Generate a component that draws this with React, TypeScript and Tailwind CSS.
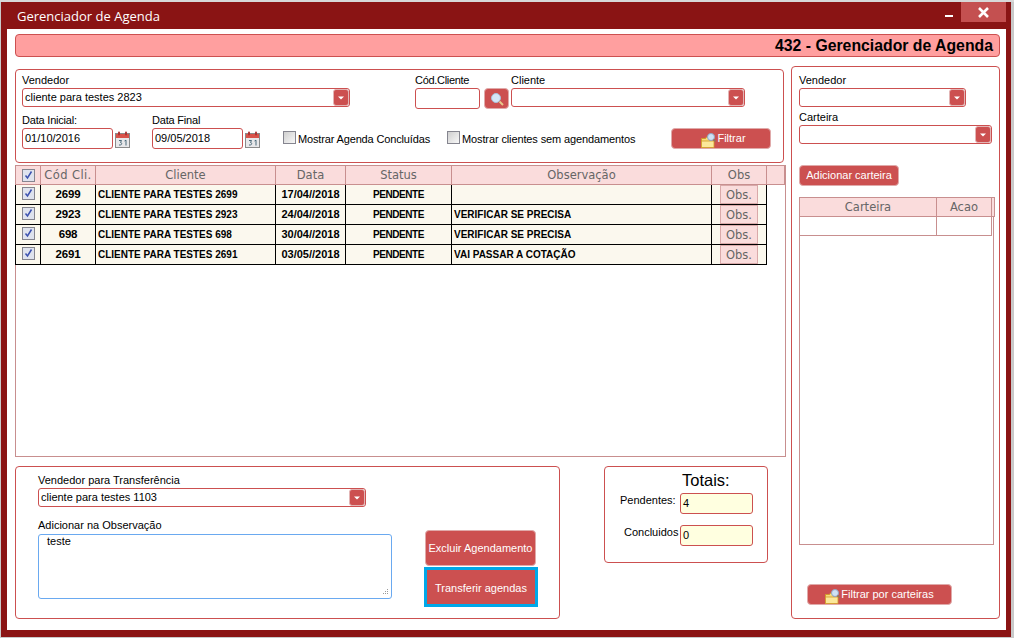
import React from 'react';

const rows = [
  { cod: '2699', cliente: 'CLIENTE PARA TESTES 2699', data: '17/04//2018', obs: '' },
  { cod: '2923', cliente: 'CLIENTE PARA TESTES 2923', data: '24/04//2018', obs: 'VERIFICAR SE PRECISA' },
  { cod: '698', cliente: 'CLIENTE PARA TESTES 698', data: '30/04//2018', obs: 'VERIFICAR SE PRECISA' },
  { cod: '2691', cliente: 'CLIENTE PARA TESTES 2691', data: '03/05//2018', obs: 'VAI PASSAR A COTAÇÃO' },
];

const Select = ({ value, className }: { value?: string; className: string }) => (
  <div className={`h-[19px] border border-[#cc5050] rounded-[3px] bg-white flex items-center justify-between pl-[2px] text-[11px] leading-none ${className}`}>
    <span>{value}</span>
    <span className="w-[16px] h-[17px] bg-[#cc5050] border border-[#e3b5b5] rounded-[3px] flex items-center justify-center">
      <svg width="6" height="4" viewBox="0 0 6 4"><path d="M0 0.5h6L3 3.5z" fill="#fff" /></svg>
    </span>
  </div>
);

const Label = ({ children, className = '' }: { children: React.ReactNode; className?: string }) => (
  <div className={`h-[14px] leading-[13px] text-[11px] ${className}`}>{children}</div>
);

const Calendar = () => (
  <svg width="15" height="17" viewBox="0 0 15 17" className="ml-[2px] mt-[3px] shrink-0">
    <rect x="0.5" y="2.5" width="14" height="14" fill="#e8e8ea" stroke="#8a8a8a" />
    <rect x="1" y="3" width="13" height="4" fill="#d9534a" />
    <rect x="3" y="0.5" width="2" height="4" rx="1" fill="#a33" />
    <rect x="10" y="0.5" width="2" height="4" rx="1" fill="#a33" />
    <path d="M4 9.5h2.5l-1 2c1 0 1.2.6 1.2 1.3s-.6 1.4-2.7 1.2M9.5 10l1.5-.8v5.3" fill="none" stroke="#4a6a7a" strokeWidth="1" />
  </svg>
);

const Checkbox = ({ checked, className = '' }: { checked?: boolean; className?: string }) => (
  <span className={`w-[13px] h-[13px] shrink-0 border border-[#85858f] flex items-center justify-center ${checked ? 'bg-[#dfe3ee]' : 'bg-gradient-to-br from-[#cfcfcf] to-[#f8f8f8]'} ${className}`}>
    {checked && (
      <svg width="11" height="11" viewBox="0 0 11 11"><path d="M2.5 5.5l2 2.5 4-6.5" fill="none" stroke="#3d52b0" strokeWidth="1.5" /></svg>
    )}
  </span>
);

const FolderIcon = () => (
  <svg width="15" height="15" viewBox="0 0 15 15" className="shrink-0">
    <path d="M0.5 5.5h4l1-1.5h3v10.5h-8z" fill="#f7dc7a" stroke="#d19a2a" />
    <rect x="0.5" y="8" width="12.5" height="6.5" fill="#fbe89a" stroke="#d19a2a" strokeWidth="0.8" />
    <circle cx="10" cy="4" r="3.5" fill="#cfe1f5" stroke="#8fa6c4" />
    <path d="M12.5 6.5l2 2" stroke="#8a7a5a" strokeWidth="1.5" />
  </svg>
);

const redBtn = 'bg-[#cc5050] border border-[#e0aaaa] rounded-[4px] text-white text-[11px] flex items-center justify-center leading-none';

const Input = ({ value, className }: { value?: string; className: string }) => (
  <div className={`h-[21px] border border-[#cc5050] rounded-[3px] pl-[2px] flex items-center text-[11px] ${className}`}>{value}</div>
);

const headCell = 'border border-[#c88f8f] bg-[#fadcdc] text-[#666] font-normal text-[11.5px] h-[19px] p-0 pt-px text-center';
const bodyCell = 'border border-black bg-[#fbf8ee] h-[20px] p-0 text-[10px] font-bold text-black leading-none';

export default function App() {
  return (
    <div className="w-[1014px] h-[638px] bg-[#c9c9c9] overflow-hidden text-black text-[11px] font-['Liberation_Sans',Arial,sans-serif]">
      <div className="h-[2px] bg-[#d8d8d8]" />
      <div className="ml-[1px] w-[1010px] h-[635px] bg-[#8a1414] pl-[6px] pr-[5px] pb-[7px] flex flex-col">
        {/* title bar */}
        <div className="h-[27px] flex items-start justify-between shrink-0">
          <div className="text-white text-[13px] pl-[10px] pt-[5px] leading-[18px] font-['Open_Sans',sans-serif]">Gerenciador de Agenda</div>
          <div className="flex items-start">
            <span className="w-[8px] h-[2px] bg-white mt-[13px] mr-[8px]" />
            <span className="w-[45px] h-[20px] bg-[#c45050] flex items-center justify-center">
              <svg width="11" height="11" viewBox="0 0 11 11"><path d="M1 1l9 9M10 1l-9 9" stroke="#fff" strokeWidth="2.6" /></svg>
            </span>
          </div>
        </div>

        {/* content */}
        <div className="flex-1 bg-white pl-[8px] pr-[6px] pt-[5px]">
          <div className="h-[23px] bg-[#ff9f9f] border border-[#cc5050] rounded-[4px] flex items-center justify-end pr-[6px] text-[15.8px] font-bold leading-none">
            432 - Gerenciador de Agenda
          </div>

          <div className="flex items-start mt-[9px]">
            <div className="w-[771px] mt-[3px] shrink-0">
              {/* filters */}
              <div className="w-[769px] h-[94px] border border-[#cc5050] rounded-[4px] pl-[6px] pt-[4px]">
                <div className="flex items-start h-[35px]">
                  <div className="w-[328px]">
                    <Label>Vendedor</Label>
                    <Select value="cliente para testes 2823" className="w-[328px]" />
                  </div>
                  <div className="ml-[65px] w-[65px]">
                    <Label className="tracking-[-0.3px]">Cód.Cliente</Label>
                    <Input className="w-[65px] h-[19px]" />
                  </div>
                  <div className="ml-[4px] mt-[14px] w-[25px] h-[21px] bg-[#cc5050] border border-[#e0aaaa] rounded-[4px] flex items-center justify-center">
                    <svg width="14" height="14" viewBox="0 0 14 14">
                      <circle cx="6" cy="6" r="4.5" fill="#d5e6f7" stroke="#a9c2dc" />
                      <path d="M9.5 9.5l3.5 3.5" stroke="#e8c98a" strokeWidth="2" />
                    </svg>
                  </div>
                  <div className="ml-[2px]">
                    <Label>Cliente</Label>
                    <Select className="w-[234px]" />
                  </div>
                </div>
                <div className="flex items-start mt-[5px]">
                  <div className="w-[130px]">
                    <Label className="tracking-[-0.2px]">Data Inicial:</Label>
                    <div className="flex items-start">
                      <Input value="01/10/2016" className="w-[91px]" />
                      <Calendar />
                    </div>
                  </div>
                  <div className="w-[131px]">
                    <Label className="tracking-[-0.2px]">Data Final</Label>
                    <div className="flex items-start">
                      <Input value="09/05/2018" className="w-[91px]" />
                      <Calendar />
                    </div>
                  </div>
                  <div className="w-[164px] mt-[17px] flex items-start">
                    <Checkbox />
                    <span className="ml-[2px] mt-[2px] leading-[13px] tracking-[-0.15px]">Mostrar Agenda Concluídas</span>
                  </div>
                  <div className="w-[224px] mt-[17px] flex items-start">
                    <Checkbox />
                    <span className="ml-[2px] mt-[2px] leading-[13px] tracking-[-0.12px]">Mostrar clientes sem agendamentos</span>
                  </div>
                  <div className={`${redBtn} mt-[14px] w-[100px] h-[21px] pl-[5px]`}>
                    <span className="mt-[4px]"><FolderIcon /></span>
                    <span className="ml-[1px]">Filtrar</span>
                  </div>
                </div>
              </div>

              {/* grid */}
              <div className="mt-[2px] h-[292px] border border-[#c88f8f]">
                <table className="table-fixed border-collapse w-[769px] font-['DejaVu_Sans',sans-serif] -mt-px -ml-px">
                  <colgroup>
                    <col className="w-[25px]" />
                    <col className="w-[55px]" />
                    <col className="w-[180px]" />
                    <col className="w-[70px]" />
                    <col className="w-[106px]" />
                    <col className="w-[260px]" />
                    <col className="w-[55px]" />
                    <col className="w-[18px]" />
                  </colgroup>
                  <thead>
                    <tr>
                      <th className={headCell}><Checkbox checked className="mx-auto" /></th>
                      <th className={`${headCell} tracking-[0.4px]`}>Cód Cli.</th>
                      <th className={headCell}>Cliente</th>
                      <th className={headCell}>Data</th>
                      <th className={headCell}>Status</th>
                      <th className={headCell}>Observação</th>
                      <th className={headCell}>Obs</th>
                      <th className={headCell}></th>
                    </tr>
                  </thead>
                  <tbody className="font-['Liberation_Sans',sans-serif]">
                    {rows.map((r) => (
                      <tr key={r.cod}>
                        <td className={bodyCell}><Checkbox checked className="mx-auto -mt-[2px]" /></td>
                        <td className={`${bodyCell} text-center text-[11.5px] tracking-[-0.2px]`}>{r.cod}</td>
                        <td className={`${bodyCell} pl-[2px]`}>{r.cliente}</td>
                        <td className={`${bodyCell} text-center text-[11px]`}>{r.data}</td>
                        <td className={`${bodyCell} text-center tracking-[-0.45px]`}>PENDENTE</td>
                        <td className={`${bodyCell} pl-[2px]`}>{r.obs}</td>
                        <td className={bodyCell}>
                          <div className="mx-auto w-[38px] h-[19px] pt-px bg-[#fadcdc] border border-[#d9a9a9] text-[#666] font-normal font-['DejaVu_Sans',sans-serif] text-[11.5px] flex items-center justify-center">Obs.</div>
                        </td>
                      </tr>
                    ))}
                  </tbody>
                </table>
              </div>

              {/* bottom */}
              <div className="flex items-start mt-[9px]">
                <div className="w-[545px] h-[153px] border border-[#cc5050] rounded-[4px] pl-[22px] pt-[7px] flex items-start">
                  <div className="w-[354px]">
                    <Label>Vendedor para Transferência</Label>
                    <Select value="cliente para testes 1103" className="w-[328px]" />
                    <Label className="mt-[12px]">Adicionar na Observação</Label>
                    <div className="relative mt-px h-[65px] border border-[#6aa9f0] rounded-[3px] pl-[8px] leading-[13px]">
                      teste
                      <svg width="8" height="8" viewBox="0 0 8 8" className="absolute right-[2px] bottom-[2px]">
                        <path d="M6 1h1v1H6zM4 3h1v1H4zM6 3h1v1H6zM2 5h1v1H2zM4 5h1v1H4zM6 5h1v1H6z" fill="#9a9a9a" />
                      </svg>
                    </div>
                  </div>
                  <div className="ml-[32px] mt-[56px] w-[114px]">
                    <div className={`${redBtn} ml-px w-[111px] h-[36px]`}>Excluir Agendamento</div>
                    <div className="mt-px w-[114px] h-[40px] border-[3px] border-[#00a8e8] bg-[#cc5050] text-white flex items-center justify-center pt-[2px]">Transferir agendas</div>
                  </div>
                </div>
                <div className="ml-[44px] w-[164px] h-[97px] border border-[#cc5050] rounded-[4px] pl-[15px] pt-[2px]">
                  <div className="pl-[62px] text-[16.5px] leading-[22px]">Totais:</div>
                  <div className="flex items-start mt-[2px]">
                    <span className="w-[60px] leading-[14px]">Pendentes:</span>
                    <Input value="4" className="w-[73px] bg-[#ffffe0]" />
                  </div>
                  <div className="flex items-start mt-[11px]">
                    <span className="w-[60px] pl-[4px] leading-[14px]">Concluidos</span>
                    <Input value="0" className="w-[73px] bg-[#ffffe0]" />
                  </div>
                </div>
              </div>
            </div>

            {/* right panel */}
            <div className="ml-[5px] w-[209px] h-[553px] border border-[#cc5050] rounded-[4px] pl-[7px] pt-[7px] shrink-0">
              <Label>Vendedor</Label>
              <Select className="w-[167px]" />
              <Label className="mt-[4px]">Carteira</Label>
              <Select className="w-[193px]" />
              <div className={`${redBtn} mt-[21px] w-[100px] h-[21px]`}>Adicionar carteira</div>
              <div className="mt-[11px] w-[195px] h-[348px] border border-[#c88f8f]">
                <table className="table-fixed border-collapse w-[195px] font-['DejaVu_Sans',sans-serif] -mt-px -ml-px">
                  <colgroup>
                    <col className="w-[137px]" />
                    <col className="w-[55px]" />
                    <col className="w-[3px]" />
                  </colgroup>
                  <thead>
                    <tr>
                      <th className={headCell}>Carteira</th>
                      <th className={headCell}>Acao</th>
                      <th className={headCell}></th>
                    </tr>
                  </thead>
                  <tbody>
                    <tr>
                      <td className="border border-[#c88f8f] h-[19px] p-0"></td>
                      <td className="border border-[#c88f8f] h-[19px] p-0"></td>
                    </tr>
                  </tbody>
                </table>
              </div>
              <div className={`${redBtn} mt-[39px] ml-[8px] w-[145px] h-[21px]`}>
                <span className="mt-[4px]"><FolderIcon /></span>
                <span className="ml-[1px]">Filtrar por carteiras</span>
              </div>
            </div>
          </div>
        </div>
      </div>
    </div>
  );
}
